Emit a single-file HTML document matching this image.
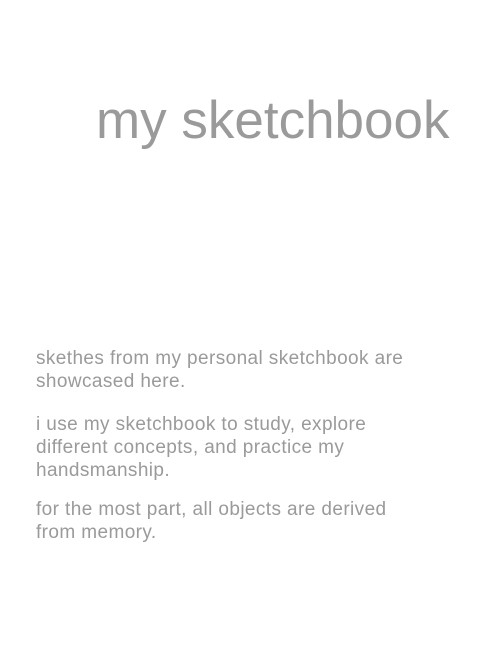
<!DOCTYPE html>
<html><head><meta charset="utf-8"><style>
html,body{margin:0;padding:0;background:#fff;width:498px;height:646px;overflow:hidden}
body{font-family:"Liberation Sans",sans-serif;color:#9a9a9a;position:relative}
h1{position:absolute;left:96px;top:91px;margin:0;font-weight:normal;font-size:53px;line-height:60px;white-space:nowrap}
.t{position:absolute;left:36px;top:347px;width:450px;font-size:19px;line-height:23px;letter-spacing:0.4px}
.t p{margin:0 0 20px 0}
.t p.b{margin-bottom:16px}
</style></head><body>
<h1>my sketchbook</h1>
<div class="t">
<p>skethes from my personal sketchbook are<br>showcased here.</p>
<p class="b">i use my sketchbook to study, explore<br>different concepts, and practice my<br>handsmanship.</p>
<p>for the most part, all objects are derived<br>from memory.</p>
</div>
</body></html>
